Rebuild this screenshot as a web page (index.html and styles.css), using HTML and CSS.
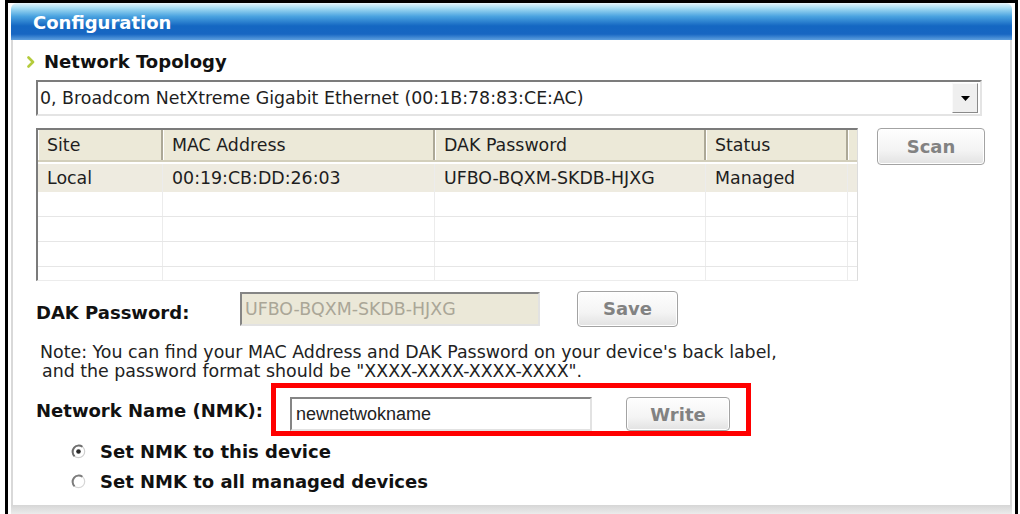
FILE: index.html
```html
<!DOCTYPE html>
<html lang="en">

<head>
    <meta charset="UTF-8">
    <title>Configuration</title>
    <link rel="stylesheet" href="styles.css">
</head>

<body>
    <div class="frame">
        <div class="panel">
            <div class="panel-head">Configuration</div>
            <div class="panel-body">
                <h3 class="section-title">
                    <svg class="bullet" width="8" height="12" viewBox="0 0 8 12">
                        <polyline points="1.5,1.5 6,6 1.5,10.5" fill="none" stroke="#b4cb3c" stroke-width="2.6" stroke-linecap="round" stroke-linejoin="round" />
                    </svg>
                    Network Topology
                </h3>

                <div class="select">
                    <span class="select-text">0, Broadcom NetXtreme Gigabit Ethernet (00:1B:78:83:CE:AC)</span>
                    <span class="select-btn">
                        <svg width="9" height="5" viewBox="0 0 9 5"><polygon points="0,0 9,0 4.5,5" fill="#000" /></svg>
                    </span>
                </div>

                <div class="device-row">
                    <div class="grid">
                        <div class="grid-head">
                            <span class="col-site">Site</span>
                            <span class="col-mac">MAC Address</span>
                            <span class="col-dak">DAK Password</span>
                            <span class="col-status">Status</span>
                            <span class="col-end"></span>
                        </div>
                        <div class="grid-row selected">
                            <span class="col-site">Local</span>
                            <span class="col-mac">00:19:CB:DD:26:03</span>
                            <span class="col-dak">UFBO-BQXM-SKDB-HJXG</span>
                            <span class="col-status">Managed</span>
                            <span class="col-end"></span>
                        </div>
                        <div class="grid-row">
                            <span class="col-site"></span><span class="col-mac"></span><span class="col-dak"></span><span class="col-status"></span><span class="col-end"></span>
                        </div>
                        <div class="grid-row">
                            <span class="col-site"></span><span class="col-mac"></span><span class="col-dak"></span><span class="col-status"></span><span class="col-end"></span>
                        </div>
                        <div class="grid-row">
                            <span class="col-site"></span><span class="col-mac"></span><span class="col-dak"></span><span class="col-status"></span><span class="col-end"></span>
                        </div>
                        <div class="grid-row last">
                            <span class="col-site"></span><span class="col-mac"></span><span class="col-dak"></span><span class="col-status"></span><span class="col-end"></span>
                        </div>
                    </div>
                    <button class="btn btn-scan">Scan</button>
                </div>

                <div class="dak-row">
                    <label class="field-label dak-label">DAK Password:</label>
                    <div class="input disabled">UFBO-BQXM-SKDB-HJXG</div>
                    <button class="btn btn-save">Save</button>
                </div>

                <div class="note">
                    <div>Note: You can find your MAC Address and DAK Password on your device's back label,</div>
                    <div class="indent">and the password format should be "XXXX-XXXX-XXXX-XXXX".</div>
                </div>

                <div class="nmk-row">
                    <label class="field-label nmk-label">Network Name (NMK):</label>
                    <div class="highlight">
                        <div class="input nmk-input">newnetwokname</div>
                        <button class="btn btn-write">Write</button>
                    </div>
                </div>

                <div class="radio-list">
                    <div class="radio">
                        <svg class="radio-mark" viewBox="0 0 15 15">
                            <circle cx="7.5" cy="7.5" r="6.2" fill="#fff" stroke="#cfcfcf" stroke-width="1.2" />
                            <path d="M11.4 2.7 A6.2 6.2 0 0 0 3.6 12.3" fill="none" stroke="#6e6e6e" stroke-width="2" />
                            <circle cx="7.5" cy="7.5" r="2.3" fill="#2a2a2a" />
                        </svg>
                        Set NMK to this device
                    </div>
                    <div class="radio">
                        <svg class="radio-mark" viewBox="0 0 15 15">
                            <circle cx="7.5" cy="7.5" r="6.2" fill="#fff" stroke="#d6d6d6" stroke-width="1.2" />
                            <path d="M11.4 2.7 A6.2 6.2 0 0 0 3.6 12.3" fill="none" stroke="#7c7c7c" stroke-width="2" />
                        </svg>
                        Set NMK to all managed devices
                    </div>
                </div>
            </div>
            <div class="panel-foot"></div>
        </div>
    </div>
</body>

</html>
```

FILE: styles.css
```css
* {
    margin: 0;
    padding: 0;
    box-sizing: border-box;
}

body {
    background-color: #fff;
    font-family: "DejaVu Sans", Verdana, sans-serif;
    font-size: 17.4px;
    color: #1e1e1e;
    overflow: hidden;
}

.frame {
    height: 514px;
    margin: 0 2px 0 5px;
    padding: 0 3px;
    border: 3px solid #000;
    border-bottom: 0;
    overflow: hidden;
}

.panel {
    height: 100%;
    display: flex;
    flex-direction: column;
}

.panel-head {
    height: 37px;
    padding-left: 22px;
    border-radius: 6px 6px 0 0;
    background: linear-gradient(to bottom, #e6f6fc 0%, #a4dcf3 14%, #4aa3e0 36%, #1467c2 62%, #1766c2 84%, #5d9fde 100%);
    color: #fff;
    font-size: 18px;
    font-weight: bold;
    line-height: 39px;
    overflow: hidden;
}

.panel-body {
    flex: 1;
    padding: 12px 0 0 23px;
    border-left: 2px solid #d9d9d9;
    border-right: 2px solid #d9d9d9;
}

.panel-foot {
    height: 9px;
    background: linear-gradient(to bottom, #d6d6d6, #ebebeb);
}

.section-title {
    display: flex;
    align-items: center;
    height: 20px;
    margin-left: -9px;
    font-size: 18px;
    line-height: 20px;
    color: #111;
}

.bullet {
    margin-right: 9px;
}

/* dropdown */
.select {
    display: flex;
    align-items: center;
    width: 946px;
    height: 36px;
    margin-top: 8px;
    padding-left: 2px;
    border: 2px solid;
    border-color: #7c7c7c #e4e4e4 #e4e4e4 #7c7c7c;
    background-color: #fff;
}

.select-btn {
    display: flex;
    align-items: center;
    justify-content: center;
    width: 26px;
    height: 30px;
    margin-left: auto;
    margin-right: 2px;
    border: 1px solid;
    border-color: #fafafa #8a8a8a #8a8a8a #fafafa;
    background-color: #efefef;
}

/* device table */
.device-row {
    display: flex;
    align-items: flex-start;
    gap: 19px;
    margin-top: 12px;
}

.grid {
    width: 822px;
    border-top: 2px solid #7b7b7b;
    border-left: 2px solid #7b7b7b;
    border-right: 1px solid #dcdcdc;
    border-bottom: 1px solid #ececec;
}

.grid-head,
.grid-row {
    display: flex;
}

.grid-head {
    height: 32px;
    border-bottom: 2px solid #d3cfbb;
    background-color: #ece9d8;
}

.grid-head>span {
    border-right: 2px solid #aca897;
    box-shadow: inset 1px 0 0 #fff;
    line-height: 30px;
}

.grid-head>.col-end {
    border-right: 0;
}

.grid-row {
    height: 25px;
    border-bottom: 1px solid #e6e6e6;
}

.grid-row>span {
    border-right: 1px solid #ececec;
    line-height: 24px;
}

.grid-row>.col-end {
    border-right: 0;
}

.grid-row.selected {
    height: 28px;
    margin-top: 2px;
    border-bottom: 0;
    background-color: #eeebe0;
}

.grid-row.selected>span {
    line-height: 28px;
}

.grid-row.last {
    height: 13px;
    border-bottom: 0;
}

.grid span {
    flex: none;
    padding-left: 9px;
    white-space: nowrap;
}

.col-site {
    width: 125px;
}

.col-mac {
    width: 272px;
}

.col-dak {
    width: 271px;
}

.col-status {
    width: 142px;
}

.grid .col-end {
    flex: 1;
}

/* buttons */
.btn {
    height: 37px;
    border: 1px solid #a3a3a3;
    border-radius: 4px;
    background: linear-gradient(to bottom, #fefefe 0%, #f4f4f4 60%, #e2e2e2 100%);
    box-shadow: inset 0 0 0 1px #fff;
    color: #828282;
    font-family: "DejaVu Sans", Verdana, sans-serif;
    font-size: 18px;
    font-weight: bold;
}

.btn-scan {
    width: 108px;
}

.btn-save {
    width: 101px;
    height: 36px;
    margin-left: 37px;
}

.btn-write {
    width: 104px;
    height: 34px;
}

/* form rows */
.field-label {
    flex: none;
    font-size: 18px;
    font-weight: bold;
    line-height: 20px;
    color: #111;
}

.dak-row {
    display: flex;
    align-items: center;
    height: 37px;
    margin-top: 9px;
}

.dak-label {
    width: 204px;
    padding-top: 8px;
}

.input {
    height: 34px;
    padding-left: 3px;
    border: 2px solid;
    border-color: #858585 #e2e2e2 #e2e2e2 #858585;
    line-height: 30px;
    white-space: nowrap;
}

.input.disabled {
    width: 300px;
    background-color: #ebe8d8;
    color: #aaa697;
}

.note {
    margin-top: 16px;
    padding-left: 4px;
    line-height: 19px;
    color: #222;
}

.note .indent {
    padding-left: 2px;
}

.nmk-row {
    display: flex;
    align-items: center;
    margin-top: 2px;
}

.nmk-label {
    width: 235px;
    padding-top: 3px;
}

.highlight {
    display: flex;
    gap: 34px;
    padding: 9px 16px 0 14px;
    border: 5px solid #f00;
}

.nmk-input {
    width: 302px;
    padding-left: 4px;
    background-color: #fff;
    font-family: "Liberation Sans", Arial, sans-serif;
    font-size: 18px;
    color: #222;
}

/* radios */
.radio-list {
    padding-left: 35px;
}

.radio {
    display: flex;
    align-items: center;
    height: 30px;
    font-size: 18px;
    font-weight: bold;
    color: #111;
}

.radio-mark {
    flex: none;
    width: 15px;
    height: 15px;
    margin-right: 14px;
}
```
